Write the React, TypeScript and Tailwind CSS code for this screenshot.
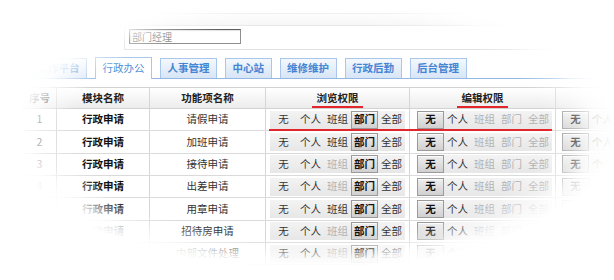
import React from 'react';

type Perm = 'on' | 'off' | 'dim';

const LABELS = ['无', '个人', '班组', '部门', '全部'];
const TABS = ['工作平台', '行政办公', '人事管理', '中心站', '维修维护', '行政后勤', '后台管理'];
const COLS = 'grid-cols-[34px_93px_116px_144px_146px_146px]';

const EDIT: Perm[] = ['on', 'off', 'dim', 'dim', 'dim'];
const ALL: Perm[] = ['off', 'off', 'off', 'on', 'off'];
const NO_TEAM: Perm[] = ['off', 'off', 'dim', 'on', 'off'];

const rows = [
  { n: 1, fn: '请假申请', browse: ALL },
  { n: 2, fn: '加班申请', browse: ALL },
  { n: 3, fn: '接待申请', browse: NO_TEAM },
  { n: 4, fn: '出差申请', browse: NO_TEAM },
  { n: 5, fn: '用章申请', browse: ALL },
  { n: 6, fn: '招待房申请', browse: NO_TEAM },
  { n: 7, fn: '内部文件处理', browse: NO_TEAM },
];

const PermGroup: React.FC<{ states: Perm[] }> = ({ states }) => (
  <div className="flex h-[18px] w-[135px] bg-linear-to-b from-[#f3f3f3] to-[#e7e7e7]">
    {LABELS.map((label, i) => {
      const s = states[i];
      return (
        <span
          key={label}
          className={`flex w-[27px] items-center justify-center ${
            s === 'on'
              ? 'border border-[#9a9a9a] bg-linear-to-b from-[#efefef] to-[#d0d0d0] font-bold text-[#111] shadow-[inset_0_1px_0_#fbfbfb]'
              : s === 'dim'
                ? 'text-[#b2b2b2]'
                : 'text-[#333]'
          }`}
        >
          {label}
        </span>
      );
    })}
  </div>
);

const Marked: React.FC<{ children: React.ReactNode }> = ({ children }) => (
  <span className="relative leading-[12px]">
    {children}
    <span className="absolute -left-[5px] -right-[4px] top-[calc(100%+2px)] h-[1.5px] bg-[#e3262b]" />
  </span>
);

export default function App() {
  return (
    <div className="relative h-[280px] w-[614px] overflow-hidden bg-white font-['Noto_Sans_CJK_SC',sans-serif] text-[10.5px] leading-none">
      {/* top bar + search box */}
      <div className="h-[50px] pt-[13px]">
        <div className="h-[13px] border-y border-[#e8e8e8] bg-linear-to-b from-[#fcfcfc] to-[#f6f6f6]" />
        <div className="ml-[124px] h-[24px] border-b border-l border-[#e0e0e0] pl-[4px] pt-[3px]">
          <div className="flex h-[15px] w-[112px] items-center border border-[#8e8e8e] border-l-[#6e6e6e] border-t-[#5e5e5e] pl-[2px] text-[10px] text-[#8a8a8a] shadow-[inset_1px_1px_1px_rgba(0,0,0,0.12)]">
            部门经理
          </div>
        </div>
      </div>

      {/* tabs */}
      <div className="mt-[7px] flex h-[22px] items-end gap-[8px] border-b border-[#92b8e3] pl-[30px]">
        {TABS.map((t) =>
          t === '行政办公' ? (
            <div
              key={t}
              className="relative -mb-px flex h-[22px] items-center border border-b-0 border-[#a9c7ea] bg-white px-[6.5px] text-[#4d8fd6]"
            >
              {t}
            </div>
          ) : (
            <div
              key={t}
              className="flex h-[20px] items-center border border-b-0 border-[#a9c7ea] bg-linear-to-b from-[#f4f8fd] to-[#d7e5f6] px-[6.5px] font-bold text-[#4584d3]"
            >
              {t}
            </div>
          )
        )}
      </div>

      {/* table */}
      <div className="ml-[23px] mt-[8px] w-[679px]">
        <div className={`grid h-[22px] ${COLS} border-y border-[#d2d2d2] bg-linear-to-b from-white to-[#ececec] font-bold text-[#222]`}>
          <div className="flex items-center justify-center border-r border-[#d6d6d6]">序号</div>
          <div className="flex items-center justify-center border-r border-[#d6d6d6]">模块名称</div>
          <div className="flex items-center justify-center border-r border-[#d6d6d6]">功能项名称</div>
          <div className="flex items-center justify-center border-r border-[#d6d6d6]">
            <Marked>浏览权限</Marked>
          </div>
          <div className="flex items-center justify-center border-r border-[#d6d6d6]">
            <Marked>编辑权限</Marked>
          </div>
          <div />
        </div>

        {rows.map((r, i) => (
          <div key={r.n} className={`relative grid h-[22.33px] ${COLS} border-b border-[#dadada]`}>
            <div className="flex items-center justify-center border-r border-[#d6d6d6] text-[#666]">{r.n}</div>
            <div className="flex items-center justify-center border-r border-[#d6d6d6] font-bold text-[#111]">行政申请</div>
            <div className="flex items-center justify-center border-r border-[#d6d6d6] text-[#333]">{r.fn}</div>
            <div className="flex items-center border-r border-[#d6d6d6] pl-[4px]">
              <PermGroup states={r.browse} />
            </div>
            <div className="flex items-center border-r border-[#d6d6d6] pl-[7px]">
              <PermGroup states={EDIT} />
            </div>
            <div className="flex items-center pl-[6px]">
              <PermGroup states={EDIT} />
            </div>
            {i === 0 && <div className="absolute left-[246px] top-[20px] h-[1.5px] w-[283px] bg-[#e3262b]" />}
          </div>
        ))}
      </div>

      {/* soft white vignette over the screenshot */}
      <div className="pointer-events-none absolute inset-0 bg-[radial-gradient(circle_at_0px_30px,#fff_45px,rgba(255,255,255,0)_105px),radial-gradient(circle_at_0px_290px,#fff_60px,rgba(255,255,255,0)_140px),radial-gradient(ellipse_330px_150px_at_310px_130px,rgba(255,255,255,0)_72%,rgba(255,255,255,0.4)_81%,rgba(255,255,255,0.85)_87%,#fff_93%)]" />
    </div>
  );
}
